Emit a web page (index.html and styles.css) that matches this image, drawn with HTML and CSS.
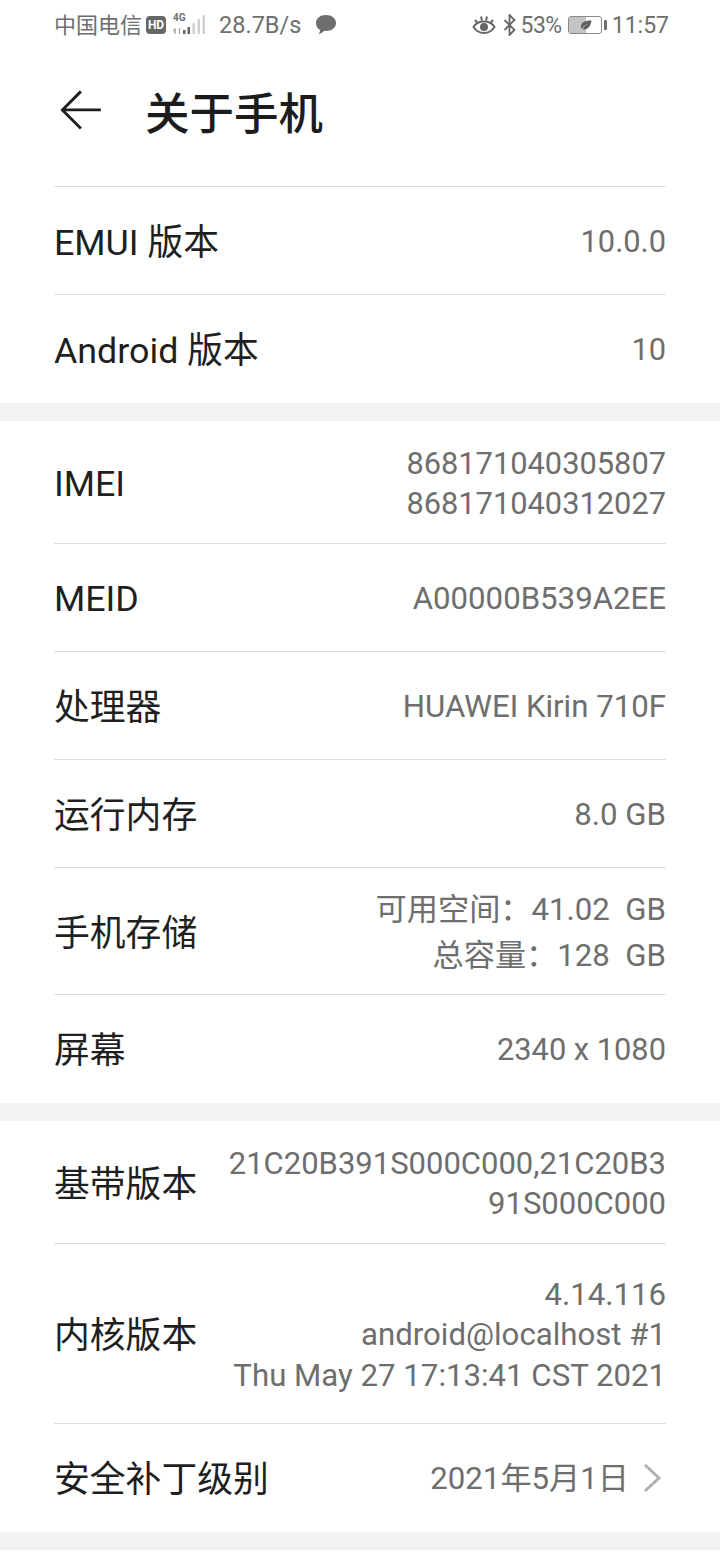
FILE: index.html
```html
<!DOCTYPE html>
<html>
<head>
  <title>关于手机</title>
  <link rel="stylesheet" href="styles.css">
</head>
<body>
  <!-- Status bar -->
  <div class="status-bar">
    <div class="status-left">
      <span class="carrier">中国电信</span>
      <span class="hd-badge">HD</span>
      <span class="signal">
        <span class="signal-top">4G</span>
        <svg class="signal-bars" width="35" height="22" viewBox="0 0 35 22">
          <path d="M1 16.500h3M3 14v6M7.500 14v6" stroke="#b0b0b0" stroke-width="1.500" fill="none"/>
          <rect x="11" y="16" width="2.500" height="4" fill="#666"/>
          <rect x="15.500" y="13" width="2.500" height="7" fill="#666"/>
          <rect x="20.500" y="9" width="2.500" height="11" fill="#d0d0d0"/>
          <rect x="25.500" y="5" width="2.500" height="15" fill="#d0d0d0"/>
          <rect x="30.500" y="1" width="2.500" height="19" fill="#d0d0d0"/>
        </svg>
      </span>
      <span class="speed">28.7B/s</span>
      <svg class="chat" width="22" height="22" viewBox="0 0 22 22">
        <path d="M11 1c5.800 0 10 3.500 10 8s-4.200 8-10 8c-.7 0-1.300 0-2-.2C7.500 18.500 5.500 20 3.500 20.300c1-1.300 1.500-2.600 1.500-4.300C2.500 14.500 1 12 1 9c0-4.500 4.200-8 10-8z" fill="#6e6e6e"/>
      </svg>
    </div>
    <div class="status-right">
      <svg width="24" height="20" viewBox="0 0 24 20">
        <path d="M1.500 12C4 8 8 6.500 12 6.500S20 8 22.500 12C20 16 16 18 12 18S4 16 1.500 12z" fill="none" stroke="#666" stroke-width="2"/>
        <circle cx="12" cy="12" r="4" fill="#666"/>
        <path d="M3 5l2.500 3M9 1.500l1 4M15 1.500l-1 4M21 5l-2.500 3" stroke="#666" stroke-width="2" fill="none"/>
      </svg>
      <svg class="bluetooth" width="14" height="22" viewBox="0 0 14 22">
        <path d="M1.500 6l10 10-5 5V1l5 5-10 10" fill="none" stroke="#666" stroke-width="1.800"/>
      </svg>
      <span class="percent">53%</span>
      <span class="battery">
        <span class="battery-body">
          <span class="battery-fill" style="width: 53%"></span>
          <svg class="leaf" width="12" height="10" viewBox="0 0 12 10">
            <path d="M11.500 .5C6 .5 1 2 1 6.500c0 1 .3 2 .8 2.800C3 6.500 5 5 8 3.500 6 5 4 6.500 2.800 9.300 7.500 10.500 10.500 6.500 11.500 .5z" fill="#5f5f5f"/>
          </svg>
        </span>
        <span class="battery-tip"></span>
      </span>
      <span class="clock">11:57</span>
    </div>
  </div>

  <!-- Header -->
  <div class="header">
    <svg class="back" width="44" height="44" viewBox="0 0 44 44">
      <path d="M22 2.500L2.500 22 22 41.500M3 22h40" transform="translate(1 1) scale(.95)" fill="none" stroke="#1f1f1f" stroke-width="3"/>
    </svg>
    <h1>关于手机</h1>
  </div>

  <div class="group first-group">
    <div class="row"><span class="label">EMUI 版本</span><span class="value digits">10.0.0</span></div>
    <div class="row"><span class="label">Android 版本</span><span class="value digits">10</span></div>
  </div>

  <div class="group">
    <div class="row tall"><span class="label latin">IMEI</span><span class="value digits">868171040305807<br>868171040312027</span></div>
    <div class="row"><span class="label latin">MEID</span><span class="value">A00000B539A2EE</span></div>
    <div class="row"><span class="label">处理器</span><span class="value">HUAWEI Kirin 710F</span></div>
    <div class="row"><span class="label">运行内存</span><span class="value">8.0 GB</span></div>
    <div class="row storage"><span class="label">手机存储</span><span class="value">可用空间：41.02&nbsp; GB<br>总容量：128&nbsp; GB</span></div>
    <div class="row"><span class="label">屏幕</span><span class="value digits">2340 x 1080</span></div>
  </div>

  <div class="group">
    <div class="row tall"><span class="label">基带版本</span><span class="value baseband">21C20B391S000C000,21C20B3<br>91S000C000</span></div>
    <div class="row kernel"><span class="label">内核版本</span><span class="value">4.14.116<br>android@localhost #1<br>Thu May 27 17:13:41 CST 2021</span></div>
    <div class="row">
      <span class="label">安全补丁级别</span>
      <span class="value-link">
        <span class="value">2021年5月1日</span>
        <svg class="chevron" width="20" height="30" viewBox="0 0 20 30">
          <path d="M3 2l14 13L3 28" fill="none" stroke="#b0b0b0" stroke-width="3"/>
        </svg>
      </span>
    </div>
  </div>
</body>
</html>
```

FILE: styles.css
```css
/* Page */
body {
  margin: 0;
  width: 720px;
  height: 1560px;
  overflow: hidden;
  background-color: #fff;
  font-family: Roboto, "Noto Sans CJK SC", sans-serif;
}

/* Status bar */
.status-bar {
  height: 50px;
  display: flex;
  align-items: center;
  justify-content: space-between;
  padding: 0 51px 0 54px;
  color: #6e6e6e;
  font-size: 23px;
}
.status-left,
.status-right {
  display: flex;
  align-items: center;
}
.carrier {
  font-size: 22px;
  margin-bottom: 4px;
}
.hd-badge {
  margin-left: 4px;
  width: 20px;
  height: 18px;
  background-color: #666;
  border-radius: 4px;
  color: #fff;
  font-size: 12px;
  font-weight: 700;
  line-height: 18px;
  text-align: center;
}
.signal {
  position: relative;
  margin-left: 6px;
  width: 35px;
  height: 22px;
  display: block;
}
.signal-top {
  position: absolute;
  left: 1px;
  top: -1px;
  font-size: 10px;
  font-weight: 700;
  line-height: 10px;
}
.signal-bars {
  display: block;
}
.speed {
  margin-left: 12px;
  font-size: 23.500px;
}
.chat {
  margin-left: 14px;
}
.bluetooth {
  margin-left: 7px;
}
.percent {
  margin-left: 4px;
  letter-spacing: -0.5px;
}
.battery {
  display: flex;
  align-items: center;
  margin-left: 6px;
}
.battery-body {
  position: relative;
  display: block;
  width: 32px;
  height: 16px;
  border: 1px solid #8a8a8a;
  border-radius: 3px;
  overflow: hidden;
}
.battery-fill {
  display: block;
  height: 100%;
  background-color: #c4c4c4;
}
.leaf {
  position: absolute;
  left: 11px;
  top: 3px;
}
.battery-tip {
  width: 3px;
  height: 10px;
  margin-left: 2px;
  background-color: #6e6e6e;
  border-radius: 1px;
}
.clock {
  margin-left: 5px;
}

/* Header */
.header {
  height: 120px;
  padding-bottom: 16px;
  display: flex;
  align-items: center;
  padding-left: 59px;
}
.back {
  display: block;
}
h1 {
  margin: 0 0 0 42px;
  font-size: 44.500px;
  font-weight: 500;
  color: #1c1c1c;
}

/* Groups and rows */
.group {
  padding: 0 54px 1px;
  border-bottom: 18px solid #f2f2f2;
}
.row {
  min-height: 107px;
  display: flex;
  align-items: center;
  justify-content: space-between;
  border-top: 1px solid #dcdcdc;
}
.group:not(.first-group) .row:first-child {
  border-top: none;
}
.group .tall {
  min-height: 122px;
}
.storage {
  min-height: 126px;
}
.kernel {
  min-height: 179px;
}
.label {
  font-size: 35.800px;
  color: #1f1f1f;
  white-space: nowrap;
  margin-bottom: 3px;
}
.label.latin {
  margin-bottom: 0;
  padding-top: 3px;
}
.value {
  font-size: 31.200px;
  line-height: 40.500px;
  color: #6e6e6e;
  text-align: right;
  white-space: nowrap;
  padding-top: 4px;
}
.value.digits {
  font-size: 30.800px;
}
.value.baseband {
  font-size: 31px;
}
.storage .value {
  line-height: 46px;
}
.value-link {
  display: flex;
  align-items: center;
  padding-right: 4px;
}
.chevron {
  margin-left: 13px;
}
```
